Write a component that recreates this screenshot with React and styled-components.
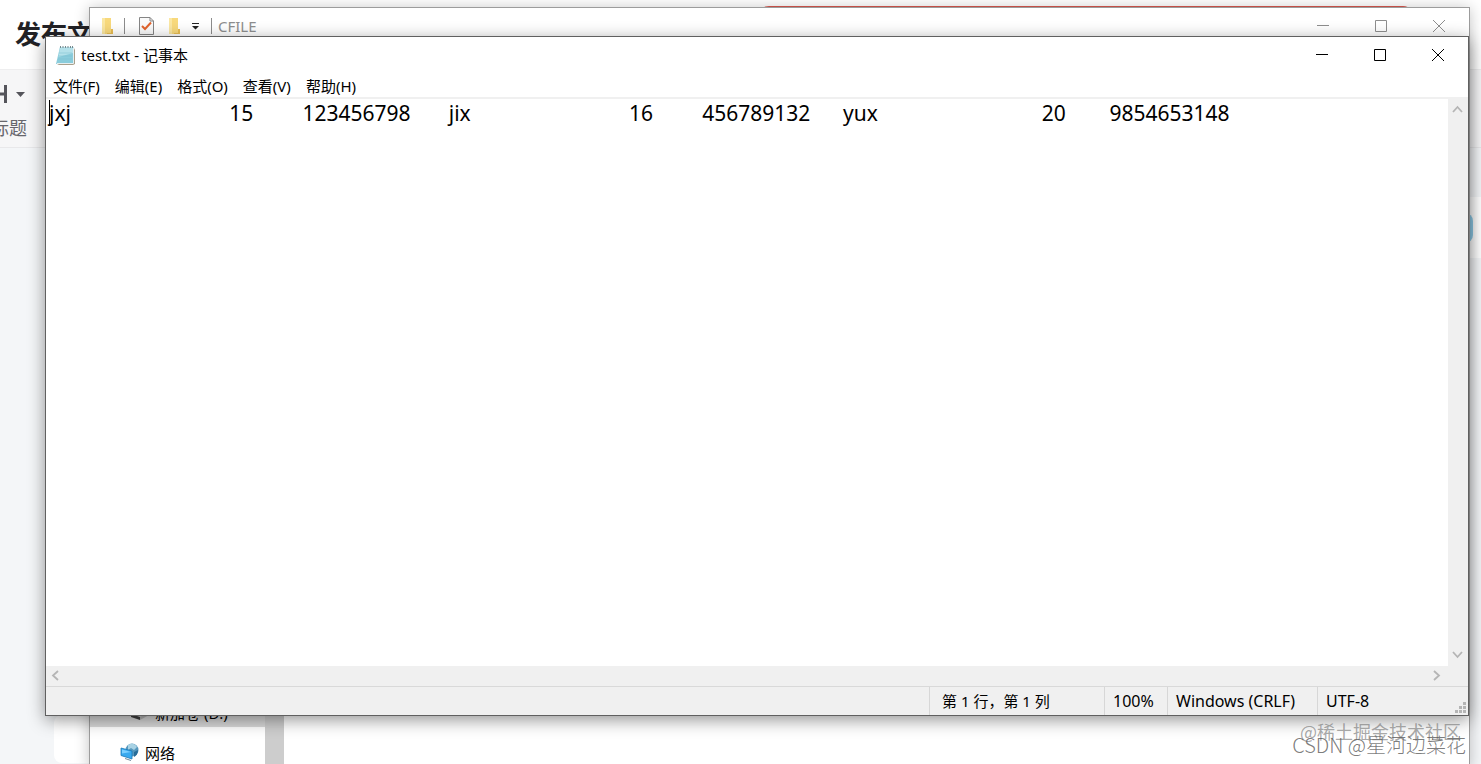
import React from "react";
import styled, { createGlobalStyle } from "styled-components";

const Global = createGlobalStyle`
  * { box-sizing: border-box; }
  body { margin: 0; background: #f4f6f8; }
  button { border: 0; padding: 0; background: none; font: inherit; color: inherit; }
`;

const uiFont = `"Noto Sans", "Noto Sans CJK SC", sans-serif`;

const Desktop = styled.main`
  position: relative;
  height: 100vh;
  overflow: hidden;
  font-family: ${uiFont};
  font-size: 15px;
  color: #000;
`;

/* Web editor behind the windows */
const Editor = styled.div`
  display: flex;
  flex-direction: column;
  height: 100%;
  background: #f4f6f8;
`;
const EditorHeader = styled.header`
  display: flex;
  align-items: flex-start;
  justify-content: space-between;
  height: 69px;
  padding: 6px 66px 0 15px;
  background: #fff;
`;
const EditorTitle = styled.h1`
  margin: 0;
  padding-top: 8px;
  font-size: 26px;
  line-height: 40px;
  font-weight: 700;
  color: #222226;
`;
const TitleField = styled.div`
  width: 47%;
  height: 48px;
  border: 2px solid #d9584f;
  border-radius: 12px;
`;
const EditorTools = styled.div`
  height: 79px;
  margin-left: -12px;
  padding-top: 14px;
  background: #f6f6f7;
  border-top: 1px solid #eeeeef;
  border-bottom: 1px solid #e8e8ea;
`;
const HeadingTool = styled.button`
  display: grid;
  justify-items: start;
  padding-left: 3px;
  font-size: 18px;
  line-height: 28px;
  color: #66666c;
`;
const HeadingIcon = styled.svg`
  display: block;
  margin-bottom: 6px;
`;
const EditorBody = styled.div`
  display: flex;
  flex-direction: column;
  align-items: flex-end;
  flex: 1;
  padding-top: 49px;
`;
const SideCard = styled.div`
  display: flex;
  align-items: center;
  justify-content: flex-end;
  width: 320px;
  height: 61px;
  padding-right: 8px;
  background: #fff;
`;
const Badge = styled.span`
  width: 40px;
  height: 30px;
  border-radius: 8px;
  background: #8fcdea;
`;
const Paper = styled.div`
  align-self: stretch;
  height: 48px;
  margin: auto 54px 1px;
  border-radius: 8px;
  background: #fff;
`;

/* Window frames */
const Frame = styled.section`
  position: absolute;
  display: flex;
  flex-direction: column;
  inset: ${(p) => (p.$front ? "36px 12px 48px 45px" : "7px 11px -4px 89px")};
  border: 1px solid ${(p) => (p.$front ? "#606060" : "#9c9c9c")};
  background: #fff;
  box-shadow: ${(p) =>
    p.$front ? "0 4px 16px rgba(0,0,0,.42)" : "0 1px 14px rgba(0,0,0,.24)"};
`;
const TitleBar = styled.header`
  display: flex;
  align-items: center;
  flex: none;
  height: 36px;
  padding-left: ${(p) => (p.$front ? "10px" : "7px")};
  padding-right: 1px;
  color: ${(p) => (p.$front ? "#000" : "#8e8e8e")};
`;
const WindowTitle = styled.h2`
  margin: 0 auto 0 6px;
  font-size: 15px;
  line-height: 20px;
  font-weight: 400;
`;
const CaptionButton = styled.button`
  display: grid;
  place-items: center;
  width: 58px;
  height: 34px;
`;
const QuickAccess = styled.div`
  display: flex;
  align-items: center;
  gap: 7px;
`;
const Separator = styled.span`
  width: 1px;
  height: 16px;
  background: #8c8c8c;
`;
const QuickButton = styled.button`
  display: grid;
  place-items: center;
  width: ${(p) => p.$width}px;
  height: 20px;
`;

/* Explorer */
const ExplorerBody = styled.div`
  display: flex;
  flex: 1;
`;
const Tree = styled.nav`
  display: flex;
  flex-direction: column;
  justify-content: flex-end;
  gap: 10px;
  width: 175px;
`;
const TreeLink = styled.a`
  display: flex;
  align-items: center;
  gap: 5px;
  height: 30px;
  padding-left: ${(p) => (p.$nested ? "40px" : "30px")};
  background: ${(p) => (p.$selected ? "#d9d9d9" : "transparent")};
  color: #000;
  text-decoration: none;
  white-space: nowrap;
`;
const TreeThumb = styled.div`
  width: 19px;
  background: #cdcdcd;
`;

/* Notepad */
const MenuBar = styled.nav`
  display: flex;
  align-items: flex-end;
  flex: none;
  gap: 15px;
  height: 26px;
  padding-left: 7px;
  border-bottom: 2px solid #f0f0f0;
`;
const MenuButton = styled.button`
  font-size: 15px;
  line-height: 22px;
  white-space: nowrap;
`;
const TextPane = styled.div`
  position: relative;
  display: flex;
  flex: 1;
`;
const TextArea = styled.textarea`
  flex: 1;
  min-width: 0;
  padding: 0 3px;
  border: 0;
  outline: 0;
  resize: none;
  overflow: hidden;
  background: #fff;
  color: #000;
  font-family: ${uiFont};
  font-size: 21px;
  line-height: 28px;
  white-space: pre;
`;
const Caret = styled.span`
  position: absolute;
  left: 3px;
  top: 1px;
  width: 1px;
  height: 25px;
  background: #000;
`;
const ScrollTrack = styled.div`
  display: flex;
  flex: none;
  flex-direction: ${(p) => (p.$vertical ? "column" : "row")};
  justify-content: space-between;
  ${(p) => (p.$vertical ? "width: 20px; padding: 1px 0;" : "height: 20px; padding-right: 21px;")}
  background: #f0f0f0;
`;
const ScrollButton = styled.button`
  display: grid;
  place-items: center;
  width: 20px;
  height: 20px;
`;
const StatusBar = styled.footer`
  position: relative;
  display: grid;
  grid-template-columns: 1fr 175px 63px 150px 151px;
  flex: none;
  height: 29px;
  border-top: 1px solid #d9d9d9;
  background: #f0f0f0;
`;
const StatusCell = styled.span`
  padding-left: ${(p) => (p.$inset ? "12px" : "8px")};
  border-left: ${(p) => (p.$plain ? "0" : "1px solid #d7d7d7")};
  font-size: ${(p) => (p.$inset ? "15px" : "16px")};
  line-height: 28px;
  white-space: nowrap;
`;
const Grip = styled.svg`
  position: absolute;
  right: 1px;
  bottom: 1px;
`;

const Watermark = styled.p`
  position: absolute;
  right: ${(p) => (p.$low ? "15px" : "20px")};
  bottom: ${(p) => (p.$low ? "6px" : "20px")};
  margin: 0;
  font-family: "Noto Sans CJK SC", sans-serif;
  font-weight: ${(p) => (p.$low ? 300 : 400)};
  font-size: ${(p) => (p.$low ? "20px" : "18px")};
  line-height: 26px;
  white-space: nowrap;
  color: ${(p) => (p.$low ? "rgba(90,90,90,.8)" : "rgba(120,120,120,.65)")};
`;

const captions = [
  ["最小化", "M0 5.5H12"],
  ["最大化", "M.5 .5H11.5V11.5H.5Z"],
  ["关闭", "M0 0L12 12M12 0L0 12"],
];

const Captions = () =>
  captions.map(([label, d]) => (
    <CaptionButton key={label} aria-label={label}>
      <svg width="12" height="12" fill="none" stroke="currentColor">
        <path d={d} />
      </svg>
    </CaptionButton>
  ));

const arrows = {
  up: "M1 8L5.5 3L10 8",
  down: "M1 3L5.5 8L10 3",
  left: "M8 1L3 5.5L8 10",
  right: "M3 1L8 5.5L3 10",
};

const Arrow = ({ dir, label }) => (
  <ScrollButton aria-label={label}>
    <svg width="12" height="12" fill="none" stroke="#b5b5b5" strokeWidth="1.8">
      <path d={arrows[dir]} />
    </svg>
  </ScrollButton>
);

const FolderIcon = () => (
  <svg width="13" height="17" viewBox="0 0 13 17">
    <path d="M1 0H10V11H12V16H1Z" fill="#f8d97c" />
    <path d="M1 0H4V16H1Z" fill="#fbe7a2" />
    <path d="M10 11H12V16H6V15H10Z" fill="#e9bd54" />
  </svg>
);

const CheckPageIcon = () => (
  <svg width="15" height="18" viewBox="0 0 15 18" fill="none">
    <path d="M.5 .5H11L14.5 4V17.5H.5Z" fill="#fafafa" stroke="#858585" />
    <path d="M11 .5V4H14.5" stroke="#858585" />
    <path d="M3 9L6 12L12 5.5" stroke="#e2632c" strokeWidth="2" />
  </svg>
);

const NotepadIcon = () => (
  <svg width="19" height="21" viewBox="0 0 19 21">
    <path d="M5 3H18L19 5V19L17 20H3L1 19Z" fill="#a9a08c" />
    <path d="M4 2H17.500L17 19H0Z" fill="#8accdb" />
    <path d="M4 2H17V8L2.500 12Z" fill="#b4e1ea" />
    <path d="M3 8H16M2.500 11H16M2 14H16" stroke="#79bfce" strokeWidth=".5" />
    <path d="M17.500 3V18.500H1" fill="none" stroke="#e7eff0" />
    <path d="M4.500 1V3M7 1V3M9.500 1V3M12 1V3M14.500 1V3M16.500 1V3" stroke="#76898e" />
  </svg>
);

const DriveIcon = () => (
  <svg width="20" height="18" viewBox="0 0 20 18">
    <path d="M1 10L8 5L19 8L10 15Z" fill="#c9c9c9" />
    <path d="M1 11L10 14V17L1 14Z" fill="#3f3f3f" />
    <path d="M10 14L19 9V12L10 17Z" fill="#b3b3b3" />
  </svg>
);

const NetworkIcon = () => (
  <svg width="20" height="18" viewBox="0 0 20 18">
    <circle cx="12" cy="7" r="6.500" fill="#5597bd" />
    <path d="M8 2C11 0 15 0 17 4L14 7L11 5L8 7Z" fill="#a8d2e4" />
    <path d="M14 9L18 7C18 11 16 13 14 14Z" fill="#286c98" />
    <path d="M1 5L12 8V16L1 12.500Z" fill="#37a9ef" stroke="#1b78b8" strokeWidth=".8" />
    <path d="M2 6.500L11 9L2 10.500Z" fill="#7bcfff" />
    <path d="M5 15.500L11 17.500" stroke="#708c9c" />
  </svg>
);

const gap = (n) => " ".repeat(n);
const fileText = [
  "jxj", gap(29), "15", gap(9), "123456798", gap(7),
  "jix", gap(29), "16", gap(9), "456789132", gap(6),
  "yux", gap(30), "20", gap(8), "9854653148",
].join("");

const menus = ["文件(F)", "编辑(E)", "格式(O)", "查看(V)", "帮助(H)"];

export default function App() {
  return (
    <Desktop>
      <Global />
      <Editor>
        <EditorHeader>
          <EditorTitle>发布文章</EditorTitle>
          <TitleField />
        </EditorHeader>
        <EditorTools>
          <HeadingTool>
            <HeadingIcon width="40" height="24" fill="none" stroke="#55555b" strokeWidth="3">
              <path d="M3 1V19M14.500 1V19M3 10H14.500" />
              <path d="M25 8H34L29.500 13Z" fill="#55555b" stroke="none" />
            </HeadingIcon>
            标题
          </HeadingTool>
        </EditorTools>
        <EditorBody>
          <SideCard>
            <Badge />
          </SideCard>
          <Paper />
        </EditorBody>
      </Editor>

      <Frame>
        <TitleBar>
          <QuickAccess>
            <QuickButton aria-label="文件夹" $width={20}>
              <FolderIcon />
            </QuickButton>
            <Separator />
            <QuickButton aria-label="属性" $width={29}>
              <CheckPageIcon />
            </QuickButton>
            <QuickButton aria-label="新建文件夹" $width={11}>
              <FolderIcon />
            </QuickButton>
            <QuickButton aria-label="自定义快速访问工具栏" $width={18}>
              <svg width="7" height="7">
                <path d="M0 0H7V1H0ZM0 3H7L3.500 6.500Z" fill="#222" />
              </svg>
            </QuickButton>
            <Separator />
          </QuickAccess>
          <WindowTitle>CFILE</WindowTitle>
          <Captions />
        </TitleBar>
        <ExplorerBody>
          <Tree>
            <TreeLink href="#d" $nested $selected>
              <DriveIcon />
              新加卷 (D:)
            </TreeLink>
            <TreeLink href="#network">
              <NetworkIcon />
              网络
            </TreeLink>
          </Tree>
          <TreeThumb />
        </ExplorerBody>
      </Frame>

      <Frame $front>
        <TitleBar $front>
          <NotepadIcon />
          <WindowTitle>test.txt - 记事本</WindowTitle>
          <Captions />
        </TitleBar>
        <MenuBar>
          {menus.map((m) => (
            <MenuButton key={m}>{m}</MenuButton>
          ))}
        </MenuBar>
        <TextPane>
          <TextArea aria-label="文本编辑器" wrap="off" spellCheck={false} defaultValue={fileText} />
          <Caret />
          <ScrollTrack $vertical>
            <Arrow dir="up" label="向上滚动" />
            <Arrow dir="down" label="向下滚动" />
          </ScrollTrack>
        </TextPane>
        <ScrollTrack>
          <Arrow dir="left" label="向左滚动" />
          <Arrow dir="right" label="向右滚动" />
        </ScrollTrack>
        <StatusBar>
          <StatusCell $plain />
          <StatusCell $inset>第 1 行，第 1 列</StatusCell>
          <StatusCell>100%</StatusCell>
          <StatusCell>Windows (CRLF)</StatusCell>
          <StatusCell>UTF-8</StatusCell>
          <Grip width="12" height="12" fill="#b5b5b5">
            <path d="M8 0h3v3h-3zM4 4h3v3h-3zM8 4h3v3h-3zM0 8h3v3h-3zM4 8h3v3h-3zM8 8h3v3h-3z" />
          </Grip>
        </StatusBar>
      </Frame>

      <Watermark>@稀土掘金技术社区</Watermark>
      <Watermark $low>CSDN @星河边菜花</Watermark>
    </Desktop>
  );
}
